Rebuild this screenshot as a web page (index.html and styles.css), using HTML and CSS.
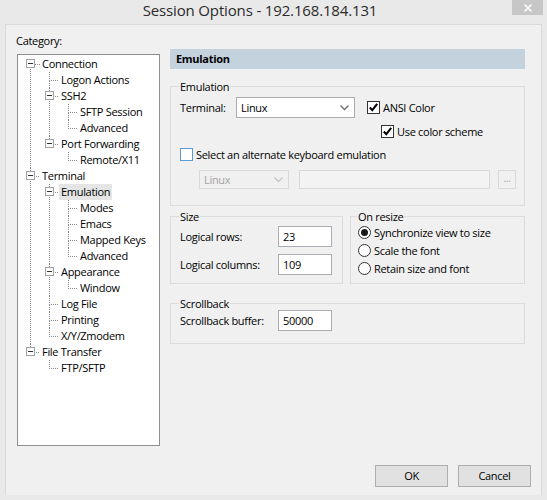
FILE: index.html
```html
<!DOCTYPE html>
<html>
<head>
<meta charset="utf-8">
<link rel="stylesheet" href="styles.css">
</head>
<body>
<div class="window">
  <div class="titlebar">
    <div class="title">Session Options - 192.168.184.131</div>
    <div class="close"><svg width="10" height="10" viewBox="0 0 10 10"><path d="M1.5 1.5 L8.5 8.5 M8.5 1.5 L1.5 8.5" stroke="#fff" stroke-width="1.6" fill="none"/></svg></div>
  </div>
  <div class="client">
    <div class="main">
      <div class="left">
        <div class="cat-label">Category:</div>
        <div class="tree">
          <ul class="root">
            <li class="open"><div class="row"><span class="exp"></span><span class="lbl">Connection</span></div>
              <ul>
                <li><div class="row"><span class="lbl">Logon Actions</span></div></li>
                <li class="open"><div class="row"><span class="exp"></span><span class="lbl">SSH2</span></div>
                  <ul>
                    <li><div class="row"><span class="lbl">SFTP Session</span></div></li>
                    <li><div class="row"><span class="lbl">Advanced</span></div></li>
                  </ul>
                </li>
                <li class="open"><div class="row"><span class="exp"></span><span class="lbl">Port Forwarding</span></div>
                  <ul>
                    <li><div class="row"><span class="lbl">Remote/X11</span></div></li>
                  </ul>
                </li>
              </ul>
            </li>
            <li class="open"><div class="row"><span class="exp"></span><span class="lbl">Terminal</span></div>
              <ul>
                <li class="open"><div class="row"><span class="exp"></span><span class="lbl sel">Emulation</span></div>
                  <ul>
                    <li><div class="row"><span class="lbl">Modes</span></div></li>
                    <li><div class="row"><span class="lbl">Emacs</span></div></li>
                    <li><div class="row"><span class="lbl">Mapped Keys</span></div></li>
                    <li><div class="row"><span class="lbl">Advanced</span></div></li>
                  </ul>
                </li>
                <li class="open"><div class="row"><span class="exp"></span><span class="lbl">Appearance</span></div>
                  <ul>
                    <li><div class="row"><span class="lbl">Window</span></div></li>
                  </ul>
                </li>
                <li><div class="row"><span class="lbl">Log File</span></div></li>
                <li><div class="row"><span class="lbl">Printing</span></div></li>
                <li><div class="row"><span class="lbl">X/Y/Zmodem</span></div></li>
              </ul>
            </li>
            <li class="open"><div class="row"><span class="exp"></span><span class="lbl">File Transfer</span></div>
              <ul>
                <li><div class="row"><span class="lbl">FTP/SFTP</span></div></li>
              </ul>
            </li>
          </ul>
        </div>
      </div>
      <div class="right">
        <div class="header">Emulation</div>
        <fieldset class="group emu">
          <legend>Emulation</legend>
          <div class="term-row">
            <span class="term-lbl">Terminal:</span>
            <div class="select"><span>Linux</span><svg class="chev" width="9" height="6" viewBox="0 0 9 6"><path d="M0.5 0.5 L4.5 4.5 L8.5 0.5" stroke="#6d6d6d" stroke-width="1.3" fill="none"/></svg></div>
            <label class="check"><span class="box on"><svg width="11" height="11" viewBox="0 0 11 11"><path d="M1.8 5.5 L4.3 8.2 L9.2 1.8" stroke="#000" stroke-width="2" fill="none"/></svg></span>ANSI Color</label>
          </div>
          <div class="scheme-row">
            <label class="check"><span class="box on"><svg width="11" height="11" viewBox="0 0 11 11"><path d="M1.8 5.5 L4.3 8.2 L9.2 1.8" stroke="#000" stroke-width="2" fill="none"/></svg></span>Use color scheme</label>
          </div>
          <div class="alt-row">
            <label class="check"><span class="box focus"></span>Select an alternate keyboard emulation</label>
          </div>
          <div class="dis-row">
            <div class="select disabled"><span>Linux</span><svg class="chev" width="9" height="6" viewBox="0 0 9 6"><path d="M0.5 0.5 L4.5 4.5 L8.5 0.5" stroke="#c4c4c4" stroke-width="1.3" fill="none"/></svg></div>
            <div class="dis-input"></div>
            <div class="dots">...</div>
          </div>
        </fieldset>
        <div class="pair">
          <fieldset class="group size">
            <legend>Size</legend>
            <div class="field"><span class="flbl">Logical rows:</span><span class="input">23</span></div>
            <div class="field"><span class="flbl">Logical columns:</span><span class="input">109</span></div>
          </fieldset>
          <fieldset class="group resize">
            <legend>On resize</legend>
            <div class="radio"><span class="circ on"></span>Synchronize view to size</div>
            <div class="radio"><span class="circ"></span>Scale the font</div>
            <div class="radio"><span class="circ"></span>Retain size and font</div>
          </fieldset>
        </div>
        <fieldset class="group scroll">
          <legend>Scrollback</legend>
          <div class="field"><span class="flbl">Scrollback buffer:</span><span class="input">50000</span></div>
        </fieldset>
      </div>
    </div>
    <div class="footer">
      <div class="btn">OK</div>
      <div class="btn">Cancel</div>
    </div>
  </div>
</div>
</body>
</html>
```
FILE: styles.css
```css
* { box-sizing: border-box; }
html, body { margin: 0; padding: 0; }
body {
  width: 547px; height: 500px; overflow: hidden;
  background: #e9e9e9;
  font-family: "Open Sans", "Noto Sans", sans-serif;
  font-size: 11px;
  letter-spacing: -0.3px;
  color: #000;
}
.window { width: 547px; height: 500px; display: flex; flex-direction: column; }
.titlebar { height: 24px; display: flex; align-items: flex-start; }
.title {
  flex: 1; text-align: center; font-size: 15px; color: #2b2b2b;
  line-height: 20px; padding-left: 8px; letter-spacing: -0.15px;
}
.close {
  width: 31px; height: 15px; background: #c7c7c7; margin-right: 4px;
  display: flex; align-items: center; justify-content: center;
}
.client {
  margin: 0 5px 0 5px; height: 471px; background: #f0f0f0;
  border: 1px solid #dadada; border-bottom: none;
  display: flex; flex-direction: column;
}
.main { display: flex; padding: 0 0 0 10px; gap: 11px; }
.left { width: 143px; display: flex; flex-direction: column; }
.cat-label { height: 29px; padding-top: 8px; line-height: 15px; }
.tree {
  margin-left: 1px; width: 143px; height: 392px; background: #fff;
  border: 1px solid #8e8f8f; padding: 1px 0 0 8px;
}
.tree ul { list-style: none; margin: 0; padding: 0; }
.tree ul ul { padding-left: 19px; }
.tree li { position: relative; }
.tree li::before {
  content: ""; position: absolute; left: 4px; top: 0; width: 10px; height: 8px;
  border-left: 1px dotted #8a8a8a; border-bottom: 1px dotted #8a8a8a;
}
.tree li::after {
  content: ""; position: absolute; left: 4px; top: 8px; bottom: 0;
  border-left: 1px dotted #8a8a8a;
}
.tree li:last-child::after { display: none; }
.tree .root > li:first-child::before { top: 8px; height: 0; border-left: none; }
.row { height: 16px; display: flex; align-items: center; position: relative; padding-left: 14px; }
.exp {
  position: absolute; left: 0; top: 3px; width: 9px; height: 9px;
  border: 1px solid #a0a0a0; background: #fff; z-index: 1;
}
.exp::after {
  content: ""; position: absolute; left: 1px; top: 3px; width: 5px; height: 1px; background: #333;
}
.lbl { padding: 0 2px; line-height: 16px; white-space: nowrap; background: #fff; position: relative; z-index: 1; }
.lbl.sel { background: #e5e5e5; }

.right { width: 355px; display: flex; flex-direction: column; padding-top: 24px; }
.header {
  height: 20px; background: #c4d2de; font-weight: bold; line-height: 20px;
  padding-left: 6px;
}
.group {
  margin: 0; border: 1px solid #dcdcdc; padding: 0 0 0 8px; min-width: 0;
}
.group legend { padding: 0 1px; margin-left: -1px; line-height: 13px; }
.emu { margin-top: 11px; height: 126px; padding-left: 9px; }
.term-row { display: flex; align-items: center; margin-top: 4px; height: 21px; }
.term-lbl { width: 56px; }
.select {
  width: 119px; height: 21px; background: #fff; border: 1px solid #acacac;
  display: flex; align-items: center; justify-content: space-between; padding: 0 5px 0 4px;
}
.select.disabled { width: 90px; height: 19px; background: #f0f0f0; border-color: #d9d9d9; color: #a2a2a2; }
.check { display: flex; align-items: center; }
.term-row .check { margin-left: 12px; }
.box {
  width: 13px; height: 13px; border: 1px solid #333; background: #fff; margin-right: 3px;
  display: flex; align-items: center; justify-content: center;
}
.box.focus { border-color: #5b9bd5; }
.scheme-row { display: flex; padding-left: 201px; margin-top: 7px; height: 13px; }
.alt-row { display: flex; margin-top: 10px; height: 13px; }
.dis-row { display: flex; align-items: center; margin-top: 9px; padding-left: 19px; height: 19px; }
.dis-input { width: 191px; height: 19px; margin-left: 10px; border: 1px solid #d9d9d9; background: #f3f3f3; }
.dots {
  width: 18px; height: 19px; margin-left: 8px; border: 1px solid #d9d9d9; color: #a8a8a8;
  text-align: center; line-height: 15px; font-size: 10px;
}
.pair { display: flex; gap: 7px; margin-top: 4px; }
.size { width: 173px; height: 74px; padding-left: 9px; }
.resize { width: 175px; height: 74px; padding-left: 7px; }
.field { display: flex; align-items: center; height: 21px; }
.size .field { margin-top: 3px; }
.size .field + .field { margin-top: 7px; }
.flbl { width: 98px; }
.input {
  width: 54px; height: 21px; background: #fff; border: 1px solid #abadb3;
  padding-left: 4px; line-height: 19px;
}
.radio { display: flex; align-items: center; height: 18px; }
.resize .radio:first-of-type { margin-top: 0; }
.circ {
  width: 13px; height: 13px; border-radius: 50%; border: 1px solid #333; background: #fff;
  margin-right: 3px; display: flex; align-items: center; justify-content: center;
}
.circ.on::after { content: ""; width: 7px; height: 7px; border-radius: 50%; background: #1a1a1a; }
.scroll { margin-top: 13px; height: 47px; padding-left: 9px; }
.scroll .field { margin-top: 0; }
.footer { margin-top: auto; display: flex; justify-content: flex-end; gap: 10px; padding: 0 10px 8px 0; }
.btn {
  width: 73px; height: 22px; background: #e1e1e1; border: 1px solid #adadad;
  text-align: center; line-height: 20px;
}
```
